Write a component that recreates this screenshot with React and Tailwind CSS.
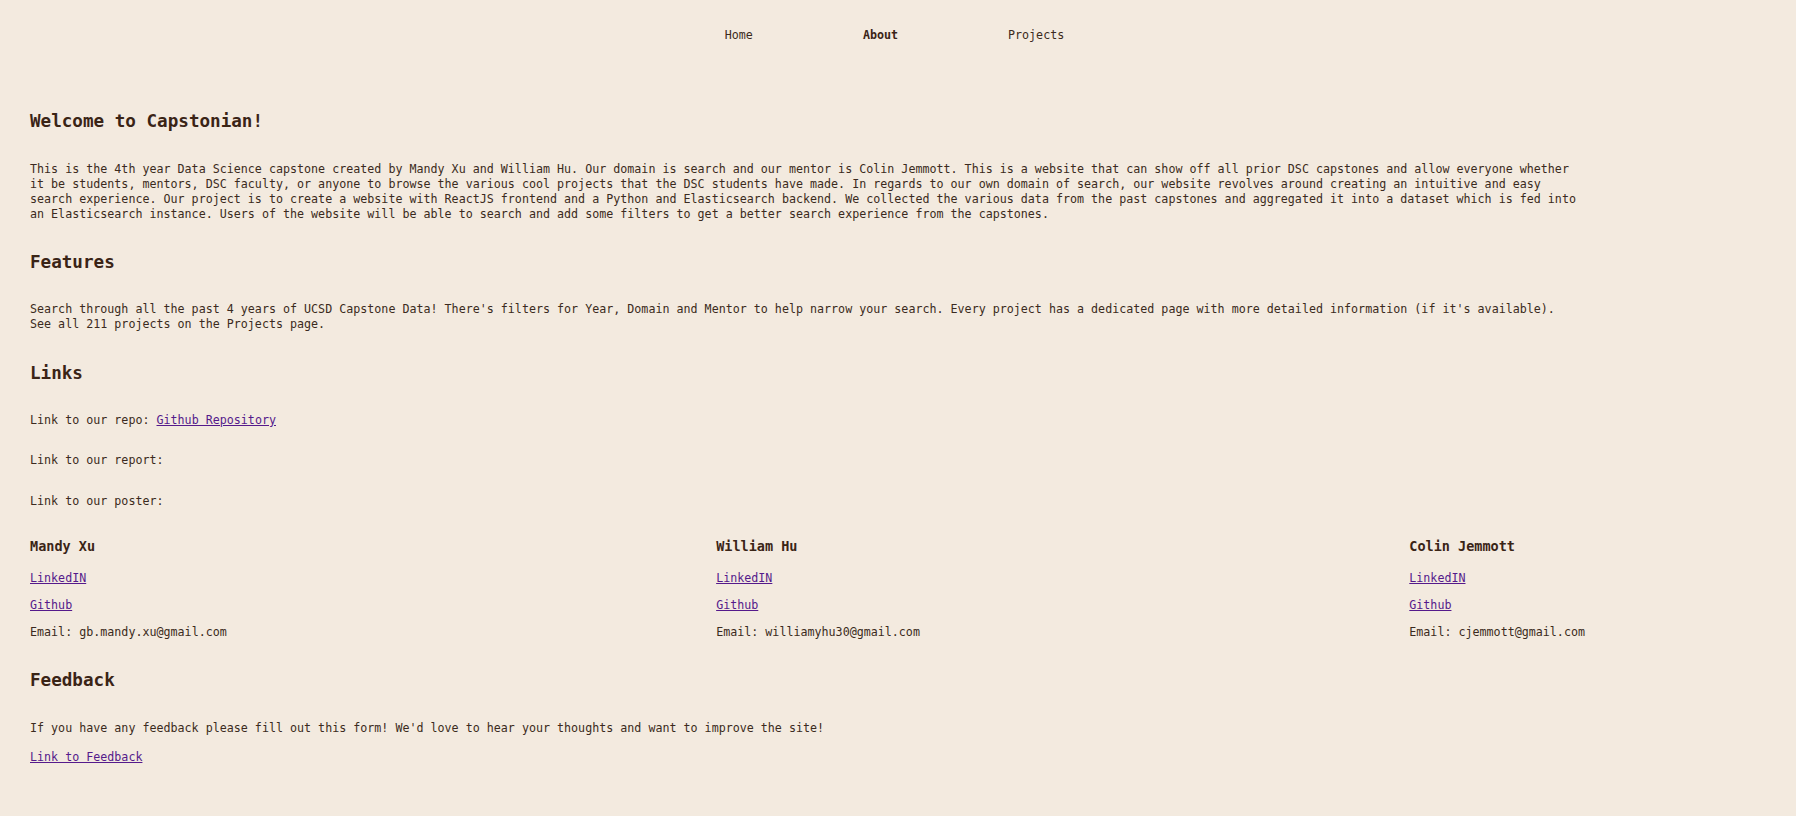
import React from "react";

const mono = { fontFamily: '"DejaVu Sans Mono", "Liberation Mono", monospace' };

function H2({ children, className = "" }) {
  return (
    <h2 className={`text-[17.6px] leading-[21px] font-bold text-[#3a2416] ${className}`}>
      {children}
    </h2>
  );
}

function A({ children }) {
  return (
    <a href="#" className="text-[#551a8b] underline">
      {children}
    </a>
  );
}

function Person({ name, email }) {
  return (
    <div className="flex flex-col">
      <h3 className="text-[13.5px] leading-[17px] font-bold text-[#3a2416]">{name}</h3>
      <p className="mt-[16px]"><A>LinkedIN</A></p>
      <p className="mt-[12px]"><A>Github</A></p>
      <p className="mt-[12px]">Email: {email}</p>
    </div>
  );
}

export default function App() {
  return (
    <div
      className="min-h-screen w-full bg-[#f3eadf] text-[#3b2a20] text-[11.68px] leading-[15px]"
      style={mono}
    >
      <nav className="flex justify-center gap-[110px] pt-[28px] pr-[7px]">
        <a href="#" className="text-[#3b2a20]">Home</a>
        <a href="#" className="font-bold text-[#3a2416]">About</a>
        <a href="#" className="text-[#3b2a20]">Projects</a>
      </nav>

      <main className="pl-[30px]">
        <div className="w-[1555px]">
          <H2 className="mt-[68px]">Welcome to Capstonian!</H2>
          <p className="mt-[30px] max-w-[1552px]">
            This is the 4th year Data Science capstone created by Mandy Xu and William Hu. Our domain is search and our mentor is Colin Jemmott. This is a website that can show off all prior DSC capstones and allow everyone whether it be students, mentors, DSC faculty, or anyone to browse the various cool projects that the DSC students have made. In regards to our own domain of search, our website revolves around creating an intuitive and easy search experience. Our project is to create a website with ReactJS frontend and a Python and Elasticsearch backend. We collected the various data from the past capstones and aggregated it into a dataset which is fed into an Elasticsearch instance. Users of the website will be able to search and add some filters to get a better search experience from the capstones.
          </p>

          <H2 className="mt-[30px]">Features</H2>
          <p className="mt-[29px] max-w-[1552px]">
            Search through all the past 4 years of UCSD Capstone Data! There's filters for Year, Domain and Mentor to help narrow your search. Every project has a dedicated page with more detailed information (if it's available). See all 211 projects on the Projects page.
          </p>

          <H2 className="mt-[31px]">Links</H2>
          <p className="mt-[29px]">
            Link to our repo: <A>Github Repository</A>
          </p>
          <p className="mt-[25px]">Link to our report:</p>
          <p className="mt-[25.5px]">Link to our poster:</p>

          <div className="mt-[29.5px] flex justify-between">
            <Person name="Mandy Xu" email="gb.mandy.xu@gmail.com" />
            <Person name="William Hu" email="williamyhu30@gmail.com" />
            <Person name="Colin Jemmott" email="cjemmott@gmail.com" />
          </div>

          <H2 className="mt-[30px]">Feedback</H2>
          <p className="mt-[30px] max-w-[1552px]">
            If you have any feedback please fill out this form! We'd love to hear your thoughts and want to improve the site!
          </p>
          <p className="mt-[14px]"><A>Link to Feedback</A></p>
        </div>
      </main>
    </div>
  );
}
